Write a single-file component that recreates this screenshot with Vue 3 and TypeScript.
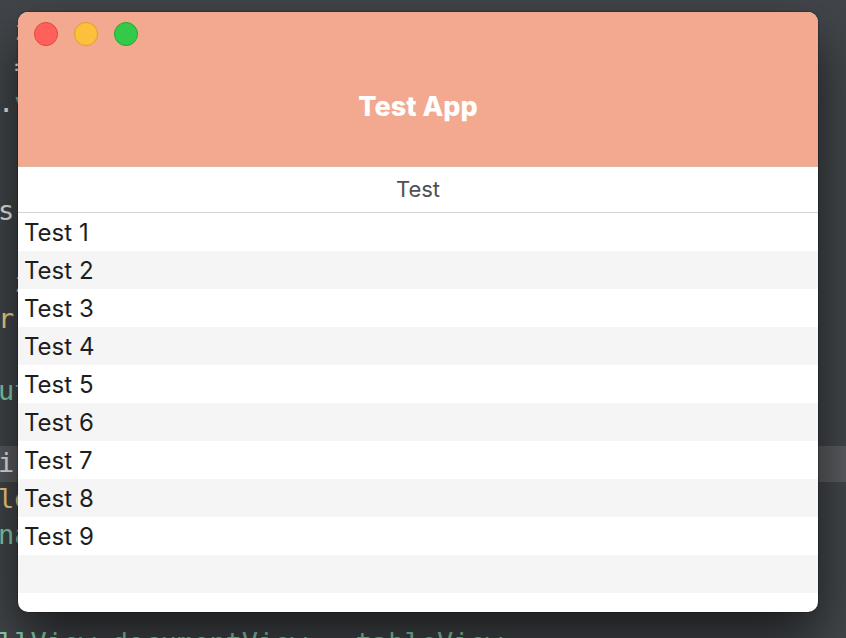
<script setup lang="ts">
interface Token {
  text: string
  tone: string
}

const codeLines: Token[][] = [
  [],
  [{ text: ' z', tone: 'gold' }],
  [{ text: ' =', tone: 'plain' }],
  [{ text: '.', tone: 'plain' }, { text: 'v', tone: 'green' }],
  [],
  [],
  [{ text: 's', tone: 'plain' }],
  [],
  [{ text: ' z', tone: 'plain' }],
  [{ text: 'r', tone: 'gold' }],
  [],
  [{ text: 'ut', tone: 'green' }],
  [],
  [{ text: 'i', tone: 'plain' }],
  [{ text: 'le', tone: 'gold' }],
  [{ text: 'na', tone: 'green' }],
  [],
  [],
  [{ text: 'llView.documentView = tableView', tone: 'dim' }],
]
const activeLine = 13

const rows: string[] = Array.from({ length: 9 }, (_, i) => `Test ${i + 1}`)
const controls = [
  { label: 'Close', tone: 'close' },
  { label: 'Minimize', tone: 'minimize' },
  { label: 'Zoom', tone: 'zoom' },
]
</script>

<template>
  <main class="desktop">
    <div class="editor" aria-hidden="true">
      <div
        v-for="(line, i) in codeLines"
        :key="i"
        class="code-line"
        :class="{ active: i === activeLine }"
      ><span v-for="(token, j) in line" :key="j" :class="token.tone">{{ token.text }}</span></div>
    </div>
    <section class="window">
      <header class="titlebar">
        <div class="controls">
          <button
            v-for="control in controls"
            :key="control.label"
            type="button"
            class="control"
            :class="control.tone"
            :aria-label="control.label"
          ></button>
        </div>
        <h1 class="title">Test App</h1>
      </header>
      <table class="list">
        <thead>
          <tr><th scope="col">Test</th></tr>
        </thead>
        <tbody>
          <tr v-for="row in rows" :key="row"><td>{{ row }}</td></tr>
          <tr><td></td></tr>
        </tbody>
      </table>
    </section>
  </main>
</template>

<style>
body {
  margin: 0;
}
</style>

<style scoped>
.desktop {
  display: grid;
  height: 100vh;
  min-height: 400px;
  overflow: hidden;
  background: #42464a;
  font-family: Inter, "Liberation Sans", sans-serif;
}

.editor,
.window {
  grid-area: 1 / 1;
  min-width: 0;
  min-height: 0;
}

.editor {
  margin-top: -22px;
  font-family: "DejaVu Sans Mono", "Liberation Mono", monospace;
  font-size: 27px;
  line-height: 34px;
}

.code-line {
  height: 36px;
  text-indent: -2px;
  white-space: pre;
}

.code-line.active {
  background: #5a5d61;
}

.plain {
  color: #f0f0ea;
}

.gold {
  color: #ffd88c;
}

.green {
  color: #84d4b0;
}

.dim {
  color: #8fd8b0;
}

.window {
  z-index: 1;
  display: flex;
  flex-direction: column;
  margin: 12px 28px 26px 18px;
  overflow: hidden;
  border-radius: 10px;
  background: #fff;
  box-shadow: 0 0 1px 1px rgba(0, 0, 0, 0.2), 0 26px 56px rgba(0, 0, 0, 0.62);
}

.titlebar {
  flex: none;
  box-sizing: border-box;
  height: 155px;
  padding: 10px 16px;
  border-bottom: 1px solid #dfb5a5;
  background: #f2a98f;
}

.controls {
  display: flex;
  gap: 16px;
}

.control {
  box-sizing: border-box;
  width: 24px;
  height: 24px;
  padding: 0;
  border: 1px solid;
  border-radius: 50%;
}

.close {
  border-color: #e2463f;
  background: #ff605c;
}

.minimize {
  border-color: #dfa023;
  background: #fdc03c;
}

.zoom {
  border-color: #1dac2d;
  background: #34ca49;
}

.title {
  margin: 45px 0 0;
  color: #fff;
  font-size: 27px;
  font-weight: 800;
  line-height: 32px;
  text-align: center;
}

.list {
  width: 100%;
  border-spacing: 0;
}

th {
  box-sizing: border-box;
  height: 46px;
  padding: 0 0 2px;
  border-bottom: 1px solid #d4d4d4;
  color: #505050;
  font-size: 22px;
  font-weight: 400;
  line-height: 28px;
}

td {
  box-sizing: border-box;
  height: 38px;
  padding: 2px 6px 0;
  color: #1e1e1e;
  font-size: 24px;
  line-height: 32px;
}

tbody tr:nth-child(even) {
  background: #f5f5f5;
}
</style>
